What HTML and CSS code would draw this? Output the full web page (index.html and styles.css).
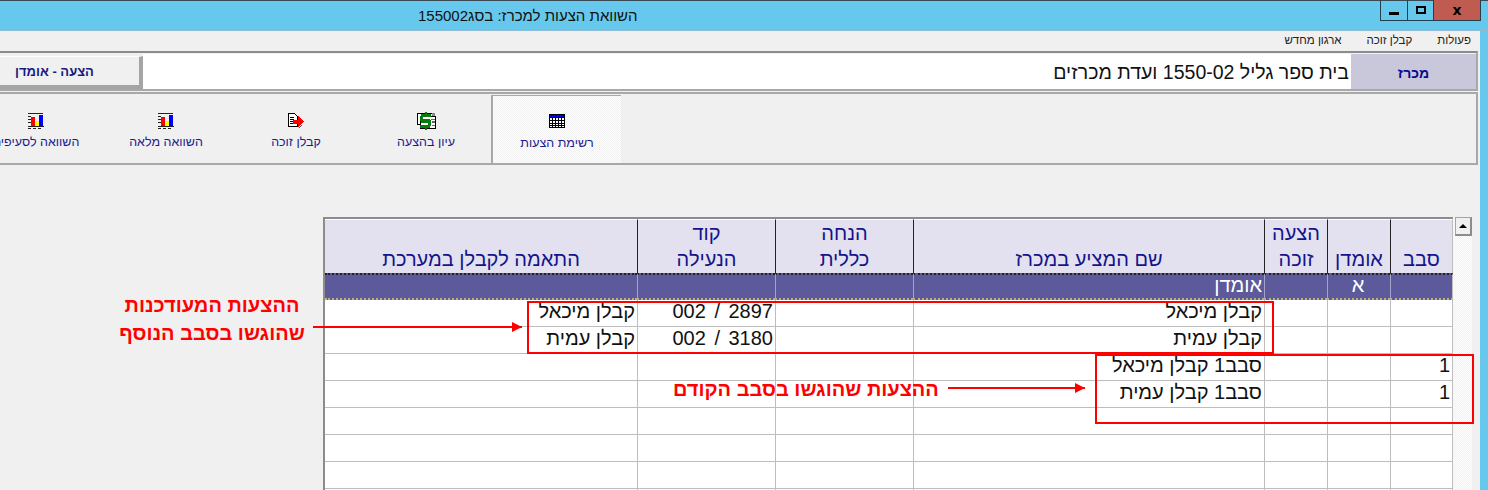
FILE: index.html
```html
<!DOCTYPE html>
<html lang="he">
<head>
<meta charset="utf-8">
<title>השוואת הצעות למכרז</title>
<link rel="stylesheet" href="styles.css">
</head>
<body>
<div class="window">
  <header class="titlebar">
    <div class="title" dir="rtl">השוואת הצעות למכרז: בסג155002</div>
    <div class="controls">
      <div class="ctl ctl-min"><span class="min-glyph"></span></div>
      <div class="ctl ctl-max"><span class="max-glyph"></span></div>
      <div class="ctl ctl-close">x</div>
    </div>
  </header>

  <div class="client">
    <nav class="menu" dir="rtl">
      <span>פעולות</span>
      <span>קבלן זוכה</span>
      <span>ארגון מחדש</span>
    </nav>

    <section class="info">
      <button class="tab-btn" dir="rtl">הצעה - אומדן</button>
      <div class="info-field" dir="rtl">בית ספר גליל 1550-02 ועדת מכרזים</div>
      <div class="info-label" dir="rtl">מכרז</div>
    </section>

    <section class="toolbar">
      <div class="tool">
        <svg class="ico" width="16" height="16" viewBox="0 0 16 16" shape-rendering="crispEdges">
          <path d="M0 0h15v1H0zM0 3h3v1H0zM0 6h3v1H0zM0 9h3v1H0zM0 13h16v1H0zM0 15h3v1H0zM5 15h3v1H5zM10 15h3v1h-3z" fill="#222"/>
          <path d="M3 4h4v9H3z" fill="#f00"/><path d="M7 8h4v5H7z" fill="#ff0"/><path d="M11 2h4v11h-4z" fill="#00f"/>
        </svg>
        <span class="tool-label">השוואה לסעיפים</span>
      </div>
      <div class="tool">
        <svg class="ico" width="16" height="16" viewBox="0 0 16 16" shape-rendering="crispEdges">
          <path d="M0 0h15v1H0zM0 3h3v1H0zM0 6h3v1H0zM0 9h3v1H0zM0 13h16v1H0zM0 15h3v1H0zM5 15h3v1H5zM10 15h3v1h-3z" fill="#222"/>
          <path d="M3 4h4v9H3z" fill="#f00"/><path d="M7 8h4v5H7z" fill="#ff0"/><path d="M11 2h4v11h-4z" fill="#00f"/>
        </svg>
        <span class="tool-label">השוואה מלאה</span>
      </div>
      <div class="tool">
        <svg class="ico" width="16" height="16" viewBox="0 0 16 16" shape-rendering="crispEdges">
          <path d="M0.5 0.5h6l3 3v10h-9z" fill="#fff" stroke="#000"/>
          <path d="M2 4h4v1H2zM2 6h4v1H2zM2 8h3v1H2zM2 10h3v1H2z" fill="#000"/>
          <path d="M5 7h5V3h1l5 5.5L11 14h-1v-3H5z" fill="#f00"/>
          <path d="M11 14h1v1h-1zM12 13h1v1h-1zM13 12h1v1h-1z" fill="#555"/>
        </svg>
        <span class="tool-label">קבלן זוכה</span>
      </div>
      <div class="tool">
        <svg class="ico ico-money" width="19" height="18" viewBox="0 0 19 18" shape-rendering="crispEdges">
          <path d="M0.5 1.5h15v11h-15z" fill="#fff" stroke="#000"/>
          <path d="M3.5 4.5h15v12h-15z" fill="#fff" stroke="#000"/>
          <path d="M15 1h3v3h-3z" fill="#888"/>
          <path d="M14 7h4v1h-4zM15 10h3v1h-3zM15 13h3v1h-3z" fill="#666"/><path d="M15 9h3v1h-3z" fill="#d33"/>
          <path d="M8 0h2v2h4v3H6v2h7v1h1v6h-1v2h-3v2H8v-2H3v-3h8v-2H4V9H3V4h1V2h4z" fill="#087a10"/>
        </svg>
        <span class="tool-label">עיון בהצעה</span>
      </div>
      <div class="tool tool-active">
        <svg class="ico" width="16" height="14" viewBox="0 0 16 14" shape-rendering="crispEdges">
          <path d="M0 0h16v14H0z" fill="#000"/><path d="M1 1h14v2H1z" fill="#00f"/><path d="M1 4h14v9H1z" fill="#fff"/>
          <path d="M1 6h14v1H1zM1 9h14v1H1zM1 11h14v1H1zM3 4h1v9H3zM6 4h1v9H6zM9 4h1v9H9zM12 4h1v9h-1z" fill="#000"/>
        </svg>
        <span class="tool-label">רשימת הצעות</span>
      </div>
    </section>

    <section class="grid-wrap">
      <table class="grid" dir="rtl">
        <colgroup>
          <col class="c-s"><col class="c-s"><col class="c-s"><col class="c-name"><col class="c-m"><col class="c-m"><col class="c-last">
        </colgroup>
        <thead>
          <tr>
            <th>סבב</th><th>אומדן</th><th>הצעה<br>זוכה</th><th>שם המציע במכרז</th><th>הנחה<br>כללית</th><th>קוד<br>הנעילה</th><th>התאמה לקבלן במערכת</th>
          </tr>
        </thead>
        <tbody>
          <tr class="row-est"><td></td><td class="center">א</td><td></td><td>אומדן</td><td></td><td></td><td></td></tr>
          <tr><td></td><td></td><td></td><td>קבלן מיכאל</td><td></td><td class="code">2897 / 002</td><td>קבלן מיכאל</td></tr>
          <tr><td></td><td></td><td></td><td>קבלן עמית</td><td></td><td class="code">3180 / 002</td><td>קבלן עמית</td></tr>
          <tr><td>1</td><td></td><td></td><td>סבב1 קבלן מיכאל</td><td></td><td></td><td></td></tr>
          <tr><td>1</td><td></td><td></td><td>סבב1 קבלן עמית</td><td></td><td></td><td></td></tr>
          <tr><td></td><td></td><td></td><td></td><td></td><td></td><td></td></tr>
          <tr><td></td><td></td><td></td><td></td><td></td><td></td><td></td></tr>
          <tr><td></td><td></td><td></td><td></td><td></td><td></td><td></td></tr>
          <tr><td></td><td></td><td></td><td></td><td></td><td></td><td></td></tr>
        </tbody>
      </table>
      <div class="scrollbar">
        <div class="scroll-up"><span class="scroll-tri"></span></div>
      </div>
    </section>
  </div>

  <div class="mark mark-a"></div>
  <div class="mark mark-b"></div>
  <div class="arrow arrow-a"></div>
  <div class="arrow arrow-b"></div>
  <div class="note note-a" dir="rtl">ההצעות המעודכנות<br>שהוגשו בסבב הנוסף</div>
  <div class="note note-b" dir="rtl">ההצעות שהוגשו בסבב הקודם</div>
</div>
</body>
</html>
```
FILE: styles.css
```css
* { box-sizing: border-box; }
html, body { margin: 0; padding: 0; }
body { background: #f0f0f0; font-family: "Liberation Sans", Arial, sans-serif; }

.window {
  position: relative;
  width: 1488px;
  height: 490px;
  overflow: hidden;
  display: flex;
  flex-direction: column;
  background: #f0f0f0;
}

/* title bar */
.titlebar {
  height: 31px;
  flex: none;
  display: flex;
  justify-content: space-between;
  align-items: flex-start;
  background: #65c8ec;
  border-top: 1px solid #3a4a55;
  border-bottom: 1px solid #8fbcd0;
  padding: 0 7px 0 418px;
}
.title { font-size: 15px; line-height: 30px; color: #111; }
.controls {
  display: flex;
  height: 21px;
  margin-top: -1px;
  border: 1px solid #24404f;
  border-top: 0;
}
.ctl {
  display: flex;
  align-items: center;
  justify-content: center;
}
.ctl-min { width: 27px; border-right: 1px solid #24404f; }
.ctl-max { width: 26px; border-right: 1px solid #24404f; }
.ctl-close {
  width: 46px;
  background: #bf5b50;
  font: bold 14px/20px "DejaVu Sans", sans-serif;
  color: #000;
}
.min-glyph { width: 10px; height: 3px; background: #000; margin-top: 7px; }
.max-glyph { width: 10px; height: 8px; border: 2px solid #000; }

/* client area */
.client {
  flex: 1;
  min-height: 0;
  display: flex;
  flex-direction: column;
  border-right: 8px solid #65c8ec;
}

.menu {
  height: 20px;
  flex: none;
  display: flex;
  gap: 25px;
  padding: 0 9px;
  font-size: 11.5px;
  line-height: 18px;
  color: #222;
}

.info {
  height: 40px;
  flex: none;
  width: 1478px;
  display: flex;
  border-top: 2px solid #8c8c8c;
  border-right: 2px solid #a8a8a8;
  border-bottom: 2px solid #a8a8a8;
  padding-top: 1px;
  background: #f0f0f0;
}
.tab-btn {
  width: 143px;
  flex: none;
  margin: 2px 0 0;
  padding: 0 30px 0 0;
  border: 0;
  border-top: 1px solid #fff;
  border-right: 4px solid #a5a5a5;
  border-bottom: 4px solid #a5a5a5;
  background: #f0f0f0;
  color: #1a1a80;
  font: bold 13px "Liberation Sans", sans-serif;
}
.info-field {
  flex: 1;
  background: #fff;
  font-size: 19.5px;
  line-height: 36px;
  padding-right: 2px;
  color: #111;
}
.info-label {
  width: 125px;
  flex: none;
  background: #c9c8da;
  color: #0a0a8c;
  font-size: 14px;
  font-weight: bold;
  line-height: 38px;
  text-align: center;
}

.toolbar {
  height: 73px;
  flex: none;
  width: 1478px;
  margin-top: 1px;
  display: flex;
  border-top: 2px solid #a8a8a8;
  border-right: 2px solid #a8a8a8;
  border-bottom: 2px solid #a8a8a8;
  overflow: hidden;
}
.tool {
  width: 130px;
  flex: none;
  display: flex;
  flex-direction: column;
  align-items: center;
  padding-top: 19px;
  gap: 5px;
  color: #1a1a90;
  font-size: 12.5px;
}
.tool:first-child { margin-left: -29px; }
.tool-label { line-height: 16px; white-space: nowrap; }
.ico { display: block; flex: none; height: 16px; }
.ico-money { height: 18px; margin-top: -1px; margin-bottom: -1px; }
.tool-active {
  margin-top: 1px;
  padding-top: 17px;
  gap: 6px;
  border-left: 2px solid #a8a8a8;
  border-top: 1px solid #a8a8a8;
  background: #fff repeating-conic-gradient(#f0f0f0 0 25%, #fff 0 50%) 0 0 / 2px 2px;
}

/* grid */
.grid-wrap {
  margin: 52px 0 0 323px;
  flex: none;
  display: flex;
  align-items: flex-start;
  width: 1149px;
}
.grid {
  width: 1130px;
  flex: none;
  table-layout: fixed;
  border-collapse: separate;
  border-spacing: 0;
  background: #fff;
  border-top: 2px solid #8c8c8c;
  border-left: 2px solid #8c8c8c;
  font-size: 20px;
  color: #111;
}
.c-s { width: 63px; }
.c-name { width: 351px; }
.c-m { width: 138px; }
.c-last { width: 312px; }
.grid th {
  height: 53px;
  padding: 0 0 1px;
  vertical-align: bottom;
  text-align: center;
  background: #e3e1ef;
  color: #14148c;
  font-size: 20px;
  font-weight: normal;
  line-height: 26px;
  border-left: 1px solid #222;
  border-top: 1px solid #fff;
}
.grid th:last-child { border-left: 0; }
.grid td {
  height: 27px;
  padding: 0 2px 3px 0;
  text-align: right;
  vertical-align: middle;
  line-height: 23px;
  white-space: nowrap;
  border-left: 1px solid #bdbdbd;
  border-bottom: 1px solid #bdbdbd;
}
.grid td.code { word-spacing: 3px; }
.grid td:last-child { border-left: 0; }
.grid td:first-child, .grid th:first-child { border-right: 1px solid #bdbdbd; }
.grid .row-est td {
  height: 27px;
  padding-bottom: 3px;
  line-height: 20px;
  background: #5c5a9b;
  color: #fff;
  border-top: 2px dotted #222;
  border-bottom: 2px dotted #b9b37a;
  border-left-color: #a5a4c8;
}
.grid .row-est .center { text-align: center; }

.scrollbar {
  width: 19px;
  height: 300px;
  background: repeating-conic-gradient(#f0f0f0 0 25%, #fff 0 50%) 0 0 / 2px 2px;
}
.scroll-up {
  height: 19px;
  margin-left: 2px;
  display: flex;
  align-items: center;
  justify-content: center;
  background: #f0f0f0;
  border: 1px solid #a5a5a5;
  border-right: 2px solid #8c8c8c;
  border-bottom: 2px solid #8c8c8c;
}
.scroll-tri {
  width: 0;
  height: 0;
  border-left: 4px solid transparent;
  border-right: 4px solid transparent;
  border-bottom: 4px solid #000;
}

/* annotations painted over the screenshot */
.mark { position: absolute; border: 2px solid #f00; }
.mark-a { left: 527px; top: 301px; width: 747px; height: 53px; }
.mark-b { left: 1095px; top: 354px; width: 379px; height: 70px; }
.arrow { position: absolute; height: 2px; background: #f00; }
.arrow::after {
  content: "";
  position: absolute;
  right: 0;
  top: -4px;
  border-left: 10px solid #f00;
  border-top: 5px solid transparent;
  border-bottom: 5px solid transparent;
}
.arrow-a { left: 313px; top: 326px; width: 209px; }
.arrow-b { left: 948px; top: 387px; width: 137px; }
.note {
  position: absolute;
  color: #f00;
  font-size: 20px;
  font-weight: bold;
  white-space: nowrap;
}
.note-a { left: 119px; top: 291px; width: 186px; line-height: 28px; text-align: center; }
.note-b { left: 673px; top: 378px; line-height: 22px; }
```
